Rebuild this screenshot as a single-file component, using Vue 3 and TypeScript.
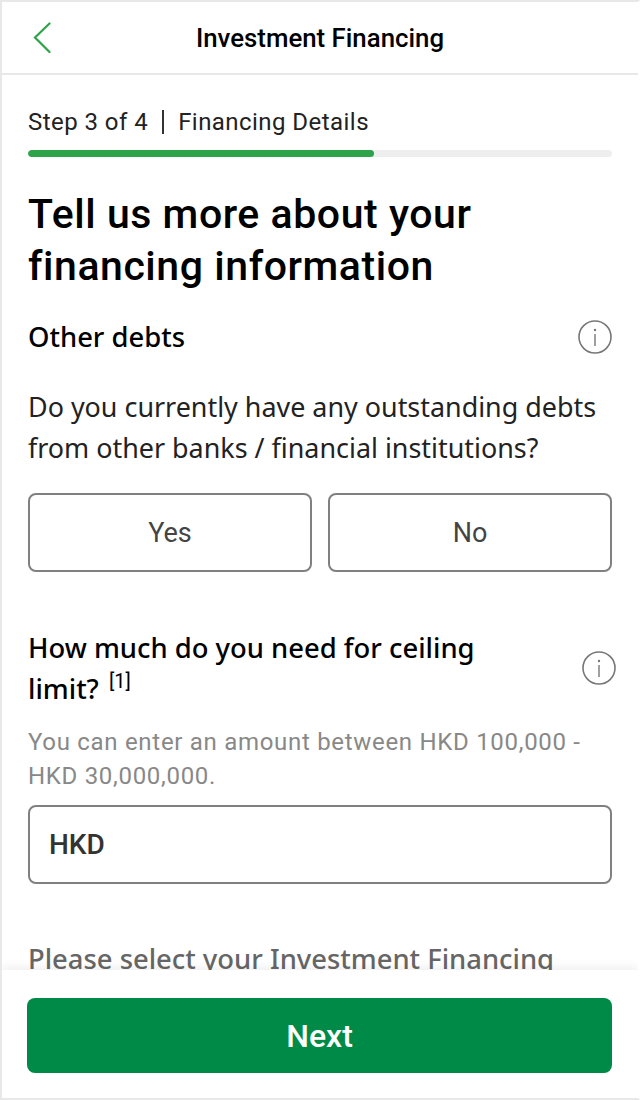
<script setup lang="ts">
const answers = ['Yes', 'No']
</script>

<template>
  <div class="page">
    <header class="topbar">
      <svg class="back" width="20" height="32" viewBox="0 0 20 32" fill="none">
        <path d="M17.5 1.5 L3 15.5 L17.5 30" stroke="#2ea44a" stroke-width="2.2" stroke-linecap="round" />
      </svg>
      <h1>Investment Financing</h1>
    </header>

    <main class="content">
      <div class="step"><span>Step 3 of 4</span><i></i><span>Financing Details</span></div>
      <div class="track"><div class="fill" :style="{ width: '59.3%' }"></div></div>

      <h2>Tell us more about your financing information</h2>

      <div class="label-row first">
        <h3>Other debts</h3>
        <svg class="info" width="34" height="34" viewBox="0 0 34 34" fill="none">
          <circle cx="17" cy="17" r="16" stroke="#777" stroke-width="1.6" />
          <path d="M17 14V26" stroke="#777" stroke-width="1.4" />
          <circle cx="17" cy="10" r="1.2" fill="#777" />
        </svg>
      </div>
      <p class="question">Do you currently have any outstanding debts from other banks / financial institutions?</p>
      <div class="choices">
        <button v-for="a in answers" :key="a" type="button">{{ a }}</button>
      </div>

      <div class="label-row second">
        <h3>
          <span class="line">How much do you need for ceiling</span>
          <span>limit?</span><sup>[1]</sup>
        </h3>
        <svg class="info" width="34" height="34" viewBox="0 0 34 34" fill="none">
          <circle cx="17" cy="17" r="16" stroke="#777" stroke-width="1.6" />
          <path d="M17 14V26" stroke="#777" stroke-width="1.4" />
          <circle cx="17" cy="10" r="1.2" fill="#777" />
        </svg>
      </div>
      <p class="hint">You can enter an amount between HKD 100,000 - HKD 30,000,000.</p>
      <div class="field">HKD</div>
      <h3 class="cut">Please select your Investment Financing</h3>
    </main>

    <footer class="footer">
      <button type="button" class="next">Next</button>
    </footer>
  </div>
</template>

<style>
html, body { margin: 0; background: #fff; }
</style>

<style scoped>
.page {
  position: relative;
  box-sizing: border-box;
  width: 640px;
  height: 1100px;
  overflow: hidden;
  background: #fff;
  color: #111;
  border: 2px solid #e8e8e8;
  border-right-color: #fff;
  font-family: Roboto, "Noto Sans", sans-serif;
}
.topbar {
  height: 71px;
  border-bottom: 2px solid #e8e8e8;
  display: flex;
  align-items: center;
  justify-content: center;
  position: relative;
}
.back { position: absolute; left: 30px; top: 20px; }
.topbar h1 {
  margin: 0;
  font-size: 25.8px;
  font-weight: 500;
  color: #000;
}
.content { padding: 0 26px; }
.step {
  display: flex;
  align-items: center;
  gap: 14px;
  font-size: 24px;
  letter-spacing: 0.45px;
  height: 30px;
  margin-top: 32px;
  color: #222;
}
.step i { width: 2px; height: 24px; background: #333; }
.track { height: 7px; margin-top: 13px; background: #eee; border-radius: 4px; overflow: hidden; }
.fill { height: 100%; background: #2ea44a; border-radius: 4px; }
h2 {
  margin: 31px 0 0;
  font-size: 41px;
  line-height: 52px;
  font-weight: 500;
  letter-spacing: 0.55px;
  color: #000;
}
h3 {
  margin: 0;
  font-family: "Noto Sans", sans-serif;
  font-size: 27.4px;
  font-weight: 500;
  line-height: 41px;
  color: #000;
}
.label-row { display: flex; justify-content: space-between; align-items: center; }
.label-row.first { margin-top: 24px; }
.label-row.second { margin-top: 55px; margin-right: -4px; }
.label-row.second h3 { width: 500px; }
.line { display: block; }
sup {
  display: inline-block;
  margin-left: 10px;
  font-family: Roboto, sans-serif;
  font-size: 20px;
  font-weight: 400;
  line-height: 20px;
  vertical-align: 11px;
}
.question {
  margin: 30px 0 0;
  font-family: "Noto Sans", sans-serif;
  font-size: 26.9px;
  line-height: 40.5px;
  color: #222;
}
.choices { display: grid; grid-template-columns: 1fr 1fr; gap: 16px; margin-top: 25px; }
.choices button {
  height: 79px;
  border: 2px solid #808080;
  border-radius: 8px;
  background: #fff;
  font: inherit;
  font-size: 27px;
  color: #444;
}
.hint { margin: 16px 0 0; font-size: 24px; line-height: 34px; letter-spacing: 0.7px; color: #888; }
.field {
  height: 75px;
  margin-top: 12px;
  padding: 0 19px;
  border: 2px solid #808080;
  border-radius: 8px;
  display: flex;
  align-items: center;
  font-size: 28px;
  font-weight: 500;
  color: #333;
}
.cut { margin-top: 54px; color: #666; }
.footer {
  position: absolute;
  left: 0;
  right: 0;
  bottom: 0;
  height: 128px;
  background: #fff;
  box-shadow: 0 -2px 10px rgba(0, 0, 0, 0.08);
  padding: 28px 26px 0 25px;
  box-sizing: border-box;
}
.next {
  width: 100%;
  height: 75px;
  border: 0;
  border-radius: 8px;
  background: #008a47;
  color: #fff;
  font-family: Roboto, sans-serif;
  font-size: 32px;
  font-weight: 500;
}
</style>
